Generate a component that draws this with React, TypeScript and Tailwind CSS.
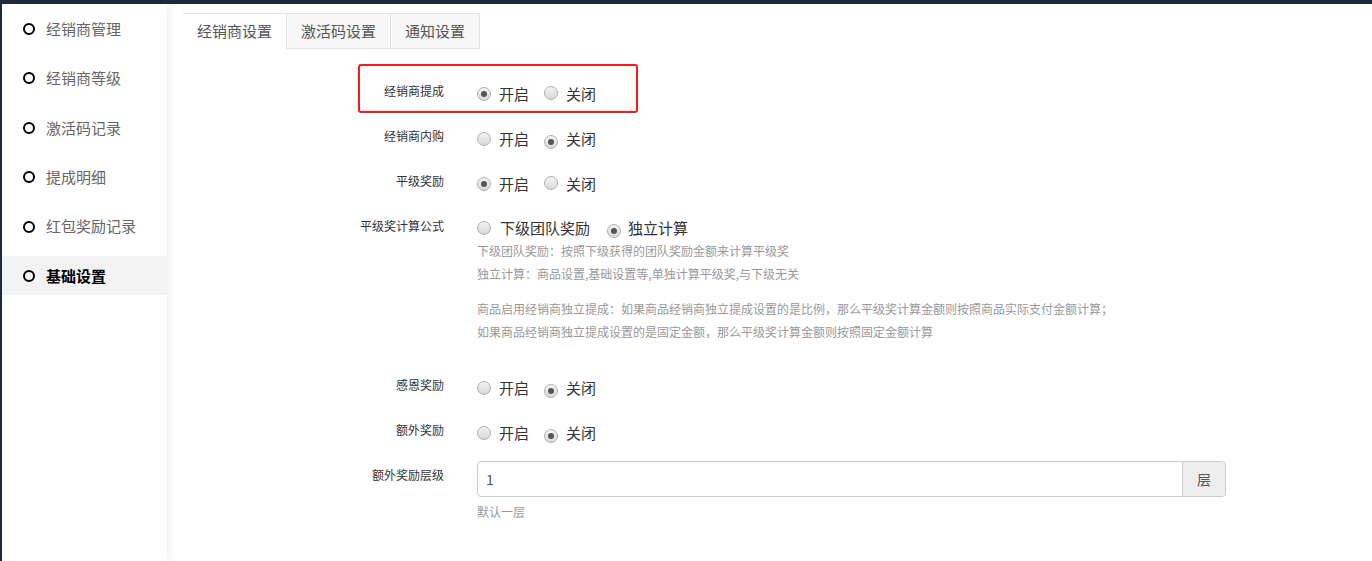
import React from "react";

const font = { fontFamily: '"Noto Sans CJK SC", "Noto Sans", sans-serif' };

const menu = ["经销商管理", "经销商等级", "激活码记录", "提成明细", "红包奖励记录", "基础设置"];

function Radio({ checked }: { checked: boolean }) {
  return (
    <span className="relative inline-flex h-[14px] w-[14px] shrink-0 items-center justify-center rounded-full border border-[#b0b0b0] bg-gradient-to-b from-[#f4f4f4] to-[#d9d9d9]">
      {checked && <span className="h-[6px] w-[6px] rounded-full bg-[#555]" />}
    </span>
  );
}

function Switch({ on }: { on: boolean }) {
  return (
    <div className="ml-[33px] flex h-[34px] items-center text-[15px] text-[#333]">
      <Radio checked={on} />
      <span className="ml-[8px]">开启</span>
      <span className="ml-[15px]">
        <Radio checked={!on} />
      </span>
      <span className="ml-[8px]">关闭</span>
    </div>
  );
}

function Label({ text }: { text: string }) {
  return (
    <div className="w-[261px] shrink-0 pt-[5px] text-right text-[12px] leading-[18px] text-[#333]">
      {text}
    </div>
  );
}

export default function App() {
  return (
    <div className="flex h-[561px] flex-col overflow-hidden bg-white" style={font}>
      <div className="h-[4px] shrink-0 bg-[#1f2b3c]" />
      <div className="flex flex-1">
        <div className="w-[2px] bg-[#1f2b3c]" />
        {/* sidebar */}
        <div className="relative z-10 w-[165px] shrink-0 bg-white pt-[5.5px] shadow-[3px_0_6px_rgba(0,0,0,0.05)]">
          {menu.map((m, i) => {
            const active = i === menu.length - 1;
            return (
              <div
                key={m}
                className={
                  "mb-[10.4px] flex h-[39px] items-center pl-[21px] text-[15px] " +
                  (active ? "bg-[#f3f3f3] font-bold text-black" : "text-[#666]")
                }
              >
                <span className="h-[12px] w-[12px] rounded-full border-2 border-black" />
                <span className="ml-[11px]">{m}</span>
              </div>
            );
          })}
        </div>

        {/* main */}
        <div className="flex-1 pl-[16px]">
          <div className="mt-[9px] flex h-[36px] text-[15px] text-[#555]">
            <div className="flex items-center border-t border-[#e5e5e5] bg-white px-[14px]">经销商设置</div>
            <div className="flex items-center border border-[#e5e5e5] bg-[#f7f7f7] px-[14px]">激活码设置</div>
            <div className="flex items-center border border-l-0 border-[#e5e5e5] bg-[#f7f7f7] px-[14px]">通知设置</div>
          </div>

          <div className="relative mt-[28px] flex">
            <div className="absolute left-[175px] top-[-13px] h-[49px] w-[280px] rounded-[3px] border-2 border-[#ff1a1a]" />
            <Label text="经销商提成" />
            <Switch on={true} />
          </div>
          <div className="mt-[11px] flex">
            <Label text="经销商内购" />
            <Switch on={false} />
          </div>
          <div className="mt-[11px] flex">
            <Label text="平级奖励" />
            <Switch on={true} />
          </div>

          <div className="mt-[11px] flex">
            <Label text="平级奖计算公式" />
            <div className="ml-[33px]">
              <div className="mt-[5px] flex h-[22px] items-center text-[15px] text-[#333]">
                <Radio checked={false} />
                <span className="ml-[9px]">下级团队奖励</span>
                <span className="ml-[17px]">
                  <Radio checked={true} />
                </span>
                <span className="ml-[7px]">独立计算</span>
              </div>
              <div className="text-[12px] leading-[23px] text-[#999]">
                <p>下级团队奖励：按照下级获得的团队奖励金额来计算平级奖</p>
                <p>独立计算：商品设置,基础设置等,单独计算平级奖,与下级无关</p>
                <p className="mt-[11.5px]">
                  商品启用经销商独立提成：如果商品经销商独立提成设置的是比例，那么平级奖计算金额则按照商品实际支付金额计算；
                </p>
                <p>如果商品经销商独立提成设置的是固定金额，那么平级奖计算金额则按照固定金额计算</p>
              </div>
            </div>
          </div>

          <div className="mt-[28.5px] flex">
            <Label text="感恩奖励" />
            <Switch on={false} />
          </div>
          <div className="mt-[11px] flex">
            <Label text="额外奖励" />
            <Switch on={false} />
          </div>

          <div className="mt-[11px] flex">
            <Label text="额外奖励层级" />
            <div className="ml-[33px] w-[749px]">
              <div className="flex h-[36px] rounded-[4px] border border-[#ccc]">
                <div className="flex flex-1 items-center pl-[8px] text-[14px] text-[#555]">1</div>
                <div className="flex w-[43px] items-center justify-center rounded-r-[4px] border-l border-[#ccc] bg-[#eee] text-[14px] text-[#555]">
                  层
                </div>
              </div>
              <p className="mt-[6px] text-[12px] leading-[18px] text-[#999]">默认一层</p>
            </div>
          </div>
        </div>
      </div>
    </div>
  );
}
